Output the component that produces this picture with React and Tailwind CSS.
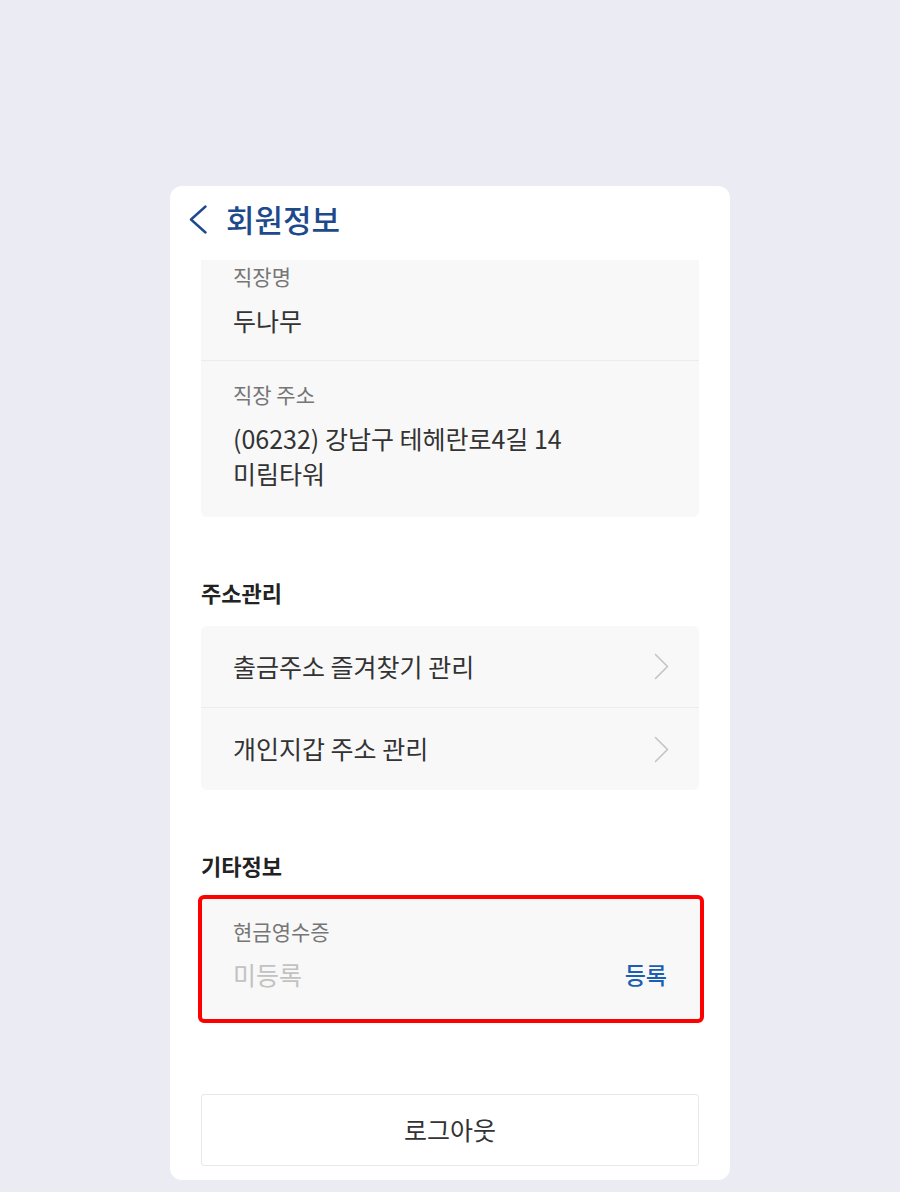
import React from 'react';

const font = { fontFamily: '"Noto Sans CJK KR", "Noto Sans", sans-serif' };

const BackIcon = () => (
  <svg width="18" height="29" viewBox="0 0 18 29" fill="none">
    <polyline points="16.5,1.5 2,14.5 16.5,27.5" stroke="#1e4a8c" strokeWidth="2.4" strokeLinecap="round" strokeLinejoin="round" />
  </svg>
);

const ChevronRight = () => (
  <svg width="15" height="27" viewBox="0 0 15 27" fill="none">
    <polyline points="1.5,1.5 13.5,13.5 1.5,25.5" stroke="#c4c4c4" strokeWidth="1.6" strokeLinecap="round" strokeLinejoin="round" />
  </svg>
);

const InfoField = ({ label, children, className = '' }) => (
  <div className={`px-8 ${className}`}>
    <div className="text-[21px] leading-[28px] text-[#767676]">{label}</div>
    <div className="mt-[13px] text-[25px] leading-[35px] text-[#333]">{children}</div>
  </div>
);

const LinkRow = ({ label, last }) => (
  <button
    className={`flex h-[82px] w-full items-center justify-between pl-8 pr-[30px] text-left ${
      last ? '' : 'border-b border-[#ececec]'
    }`}
  >
    <span className="text-[25px] text-[#333]">{label}</span>
    <ChevronRight />
  </button>
);

const SectionTitle = ({ children }) => (
  <h3 className="text-[22px] font-bold leading-[28px] text-[#222]">{children}</h3>
);

export default function App() {
  return (
    <div className="min-h-[1192px] w-full bg-[#ebebf3] pt-[186px]" style={font}>
      <div className="mx-auto w-[560px] rounded-[12px] bg-white pb-[14px]">
        {/* header */}
        <div className="flex h-[74px] items-center gap-[19px] pb-[8px] pl-[19px]">
          <BackIcon />
          <h1 className="text-[31px] font-medium leading-[40px] text-[#1e4a8c]">회원정보</h1>
        </div>

        <div className="px-[31px]">
          {/* 직장 정보 */}
          <div className="rounded-b-[6px] bg-[#f8f8f8]">
            <InfoField label="직장명" className="border-b border-[#ececec] pb-[22px] pt-[2px]">
              두나무
            </InfoField>
            <InfoField label="직장 주소" className="pb-[26px] pt-[19px]">
              (06232) 강남구 테헤란로4길 14
              <br />
              미림타워
            </InfoField>
          </div>

          {/* 주소관리 */}
          <div className="mt-[61px]">
            <SectionTitle>주소관리</SectionTitle>
            <div className="mt-[20px] rounded-[6px] bg-[#f8f8f8]">
              <LinkRow label="출금주소 즐겨찾기 관리" />
              <LinkRow label="개인지갑 주소 관리" last />
            </div>
          </div>

          {/* 기타정보 */}
          <div className="mt-[61px]">
            <SectionTitle>기타정보</SectionTitle>
            <div className="-ml-[3px] -mr-[5px] mt-[16px] rounded-[6px] border-[4px] border-[#ff0000] bg-[#f8f8f8] pb-[27px] pl-[31px] pr-[33px] pt-[18px]">
              <div className="text-[21px] leading-[28px] text-[#767676]">현금영수증</div>
              <div className="mt-[12px] flex items-center justify-between">
                <span className="text-[25px] leading-[35px] text-[#c2c2c2]">미등록</span>
                <button className="text-[23px] font-medium leading-[35px] text-[#1c5fb2]">등록</button>
              </div>
            </div>
          </div>

          <button className="mt-[71px] flex h-[72px] w-full items-center justify-center rounded-[3px] border border-[#e8e8e8] bg-white text-[25px] text-[#333]">
            로그아웃
          </button>
        </div>
      </div>
    </div>
  );
}
